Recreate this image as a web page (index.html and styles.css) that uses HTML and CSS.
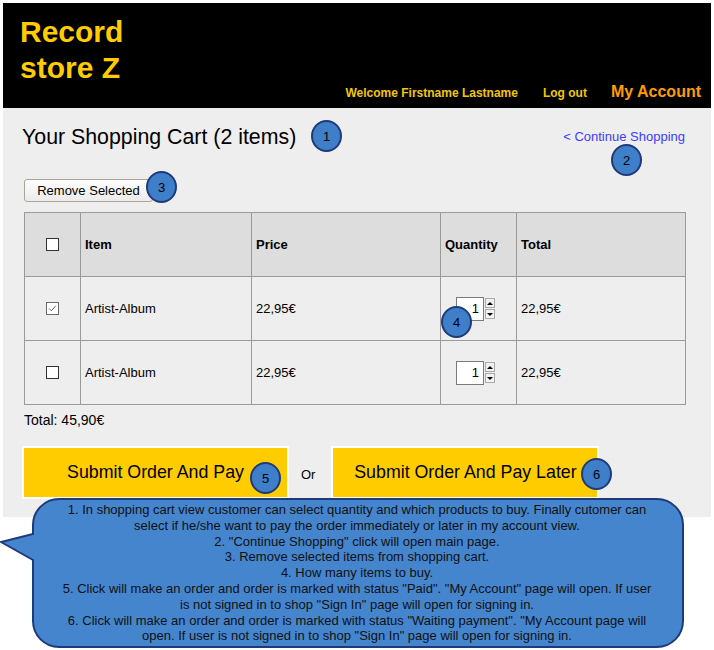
FILE: index.html
```html
<!DOCTYPE html>
<html lang="en">
<head>
<meta charset="utf-8">
<title>Record store Z - Shopping Cart</title>
<link rel="stylesheet" href="styles.css">
</head>
<body>
<div class="page">
  <div class="frame">
    <header class="header">
      <div class="logo">Record<br>store Z</div>
      <nav class="nav">
        <span class="welcome">Welcome Firstname Lastname</span>
        <a class="navlink">Log out</a>
        <a class="account">My Account</a>
      </nav>
    </header>
    <main class="content">
      <div class="titlerow">
        <h1 class="title">Your Shopping Cart (2 items)</h1>
        <a class="continue">&lt; Continue Shopping</a>
      </div>
      <button class="remove">Remove Selected</button>
      <table class="cart">
        <colgroup>
          <col class="c-check"><col class="c-item"><col class="c-price"><col class="c-qty"><col class="c-total">
        </colgroup>
        <thead>
          <tr>
            <th class="cb-cell"><span class="cb"></span></th>
            <th>Item</th>
            <th>Price</th>
            <th>Quantity</th>
            <th>Total</th>
          </tr>
        </thead>
        <tbody>
          <tr>
            <td class="cb-cell"><span class="cb cb-checked"><svg viewBox="0 0 13 13" width="11" height="11"><path d="M2.5 6.5 L5.2 9.2 L10.5 3.2" fill="none" stroke="#5a5a5a" stroke-width="1.1"/></svg></span></td>
            <td>Artist-Album</td>
            <td>22,95€</td>
            <td class="qty-cell"><span class="qty"><span class="qty-box">1</span><span class="spin"><span class="spin-btn"><span class="tri-up"></span></span><span class="spin-btn"><span class="tri-down"></span></span></span></span></td>
            <td>22,95€</td>
          </tr>
          <tr>
            <td class="cb-cell"><span class="cb"></span></td>
            <td>Artist-Album</td>
            <td>22,95€</td>
            <td class="qty-cell"><span class="qty"><span class="qty-box">1</span><span class="spin"><span class="spin-btn"><span class="tri-up"></span></span><span class="spin-btn"><span class="tri-down"></span></span></span></span></td>
            <td>22,95€</td>
          </tr>
        </tbody>
      </table>
      <div class="total">Total: 45,90€</div>
      <div class="actions">
        <button class="submit">Submit Order And Pay</button>
        <span class="or">Or</span>
        <button class="submit">Submit Order And Pay Later</button>
      </div>
    </main>
  </div>

  <div class="callout">
    <svg class="callout-shape" width="686" height="152" viewBox="0 0 686 152">
      <path d="M59 2 H657 A26 26 0 0 1 683 28 V124 A26 26 0 0 1 657 150 H59 A26 26 0 0 1 33 124 V63 L1 45 L33 37 V28 A26 26 0 0 1 59 2 Z" fill="#4585cd" stroke="#1f3a7a" stroke-width="2"/>
    </svg>
    <div class="callout-text">1. In shopping cart view customer can select quantity and which products to buy. Finally cutomer can<br>select if he/she want to pay the order immediately or later in my account view.<br>2. "Continue Shopping" click will open main page.<br>3. Remove selected items from shopping cart.<br>4. How many items to buy.<br>5. Click will make an order and order is marked with status "Paid". "My Account" page will open. If user<br>is not signed in to shop "Sign In" page will open for signing in.<br>6. Click will make an order and order is marked with status "Waiting payment". "My Account page will<br>open. If user is not signed in to shop "Sign In" page will open for signing in.</div>
  </div>

  <span class="badge b1">1</span>
  <span class="badge b2">2</span>
  <span class="badge b3">3</span>
  <span class="badge b4">4</span>
  <span class="badge b5">5</span>
  <span class="badge b6">6</span>
</div>
</body>
</html>
```
FILE: styles.css
```css
* { box-sizing: border-box; }
html, body { margin: 0; padding: 0; background: #ffffff; }
body { font-family: "Liberation Sans", Arial, sans-serif; color: #000; }

.page { position: relative; width: 714px; height: 650px; padding: 3px 3px 0 3px; }
.frame { width: 708px; }

.header {
  height: 105px;
  background: #000;
  display: flex;
  justify-content: space-between;
  align-items: flex-end;
  padding: 11px 10px 6px 17px;
}
.logo {
  align-self: flex-start;
  color: #ffcc00;
  font-weight: bold;
  font-size: 30px;
  line-height: 36px;
}
.nav {
  display: flex;
  align-items: baseline;
  line-height: 18px;
}
.welcome, .navlink {
  color: #f0c60c;
  font-weight: bold;
  font-size: 12px;
}
.navlink { margin-left: 25px; }
.account {
  margin-left: 24px;
  color: #ff9c00;
  font-weight: bold;
  font-size: 16px;
}

.content {
  background: #eeeeee;
  padding: 16px 26px 18px 21px;
}
.titlerow {
  display: flex;
  justify-content: space-between;
  align-items: flex-start;
}
.title {
  margin: 0 0 0 -2px;
  font-weight: normal;
  font-size: 21.33px;
  line-height: 26px;
}
.continue {
  margin-top: 5px;
  color: #3d3dff;
  font-size: 13px;
  line-height: 15px;
}
.remove {
  display: block;
  margin-top: 29px;
  width: 129px;
  height: 23px;
  padding: 0;
  border: 1px solid #aca496;
  border-radius: 3px;
  background: linear-gradient(#fefefe, #ebebeb);
  font-family: "Liberation Sans", Arial, sans-serif;
  font-size: 13px;
  color: #000;
}

.cart {
  margin-top: 10px;
  width: 661px;
  table-layout: fixed;
  border-collapse: collapse;
  font-size: 13px;
}
.c-check { width: 56px; }
.c-item { width: 171px; }
.c-price { width: 189px; }
.c-qty { width: 76px; }
.c-total { width: 169px; }
.cart tr { height: 64px; }
.cart th, .cart td {
  border: 1px solid #9a9a9a;
  padding: 0 4px;
  text-align: left;
  vertical-align: middle;
}
.cart th { background: #dddddd; font-weight: bold; }
.cart td { background: #eeeeee; }
.cart .cb-cell { padding: 0; }
.cb {
  display: flex;
  align-items: center;
  justify-content: center;
  width: 13px;
  height: 13px;
  margin: 0 auto;
  border: 1px solid #333;
  background: #fff;
}
.cb-checked { border-color: #6a6a6a; }
.cart .qty-cell { padding-left: 15px; }
.qty { display: flex; align-items: center; }
.qty-box {
  width: 28px;
  height: 24px;
  border: 1px solid #7a7a7a;
  background: #fff;
  text-align: right;
  padding-right: 4px;
  line-height: 22px;
  font-size: 13px;
}
.spin { display: flex; flex-direction: column; gap: 1px; margin-left: 1px; }
.spin-btn {
  width: 10px;
  height: 10px;
  border: 1px solid #a9a9a9;
  background: #f2f2f2;
  display: flex;
  align-items: center;
  justify-content: center;
}
.tri-up { width: 0; height: 0; border-left: 3px solid transparent; border-right: 3px solid transparent; border-bottom: 3px solid #000; }
.tri-down { width: 0; height: 0; border-left: 3px solid transparent; border-right: 3px solid transparent; border-top: 3px solid #000; }

.total {
  margin-top: 7px;
  font-size: 14px;
  line-height: 16px;
}
.actions {
  margin-top: 18px;
  margin-left: -2px;
  display: flex;
  align-items: center;
}
.submit {
  width: 267px;
  height: 53px;
  padding: 0;
  border: 2px solid #ffffff;
  background: #ffcc00;
  font-family: "Liberation Sans", Arial, sans-serif;
  font-size: 17.8px;
  color: #000;
}
.submit:last-child { width: 268px; }
.or {
  padding: 4px 16px 0 12px;
  font-size: 13px;
  line-height: 15px;
}

.callout {
  position: absolute;
  left: 0;
  top: 497px;
  width: 686px;
  height: 152px;
}
.callout-shape { position: absolute; left: 0; top: 0; }
.callout-text {
  position: absolute;
  left: 33px;
  top: 5px;
  width: 648px;
  text-align: center;
  font-size: 13px;
  line-height: 15.8px;
  color: #111;
  white-space: nowrap;
}

.badge {
  position: absolute;
  width: 31px;
  height: 32px;
  border-radius: 50%;
  border: 2px solid #1f3a7a;
  background: #3f7ec9;
  display: flex;
  align-items: center;
  justify-content: center;
  font-size: 13px;
  color: #000;
}
.b1 { left: 311px; top: 120px; }
.b2 { left: 611px; top: 144px; }
.b3 { left: 146px; top: 171px; }
.b4 { left: 441px; top: 306px; }
.b5 { left: 250px; top: 462px; }
.b6 { left: 581px; top: 458px; }
```
